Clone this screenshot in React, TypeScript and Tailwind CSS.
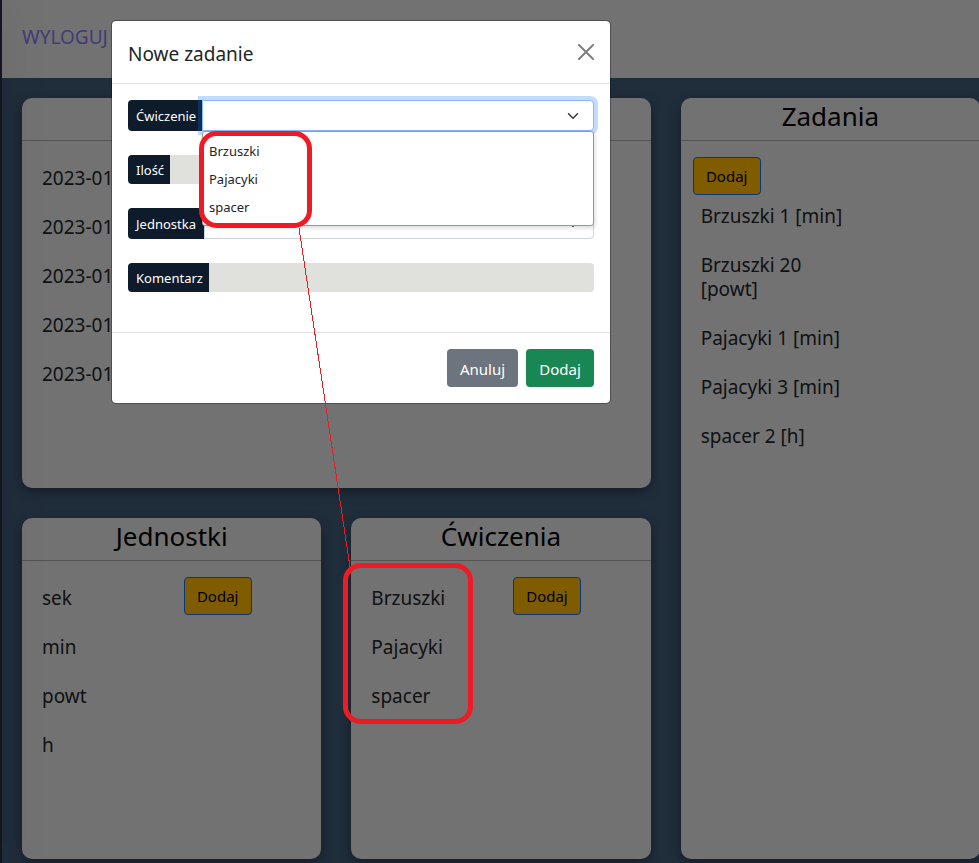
import React from "react";

const units = ["sek", "min", "powt", "h"];
const exercises = ["Brzuszki", "Pajacyki", "spacer"];
const days = ["2023-01", "2023-01", "2023-01", "2023-01", "2023-01"];
const tasks = [
  "Brzuszki 1 [min]",
  "Brzuszki 20 [powt]",
  "Pajacyki 1 [min]",
  "Pajacyki 3 [min]",
  "spacer 2 [h]",
];

function Card({
  title,
  className = "",
  children,
}: {
  title: string;
  className?: string;
  children: React.ReactNode;
}) {
  return (
    <section
      className={`rounded-[10px] bg-[#e4e4e4] shadow-[0_4px_12px_rgba(0,0,0,0.35)] ${className}`}
    >
      <h2 className="h-[43px] border-b border-[#a8a8a8] text-center text-[26px] leading-[36px] text-black">
        {title}
      </h2>
      <div className="px-3 pt-4">{children}</div>
    </section>
  );
}

function List({ items }: { items: string[] }) {
  return (
    <ul>
      {items.map((item, i) => (
        <li key={i} className="mb-2 border-t border-transparent p-2 text-[19px] leading-6">
          {item}
        </li>
      ))}
    </ul>
  );
}

function AddButton() {
  return (
    <button
      type="button"
      className="h-[38px] w-[68px] rounded border border-[#0d6efd] bg-[#ffb800] text-center text-[15px] leading-6 text-black"
    >
      Dodaj
    </button>
  );
}

function Chevron() {
  return (
    <svg
      viewBox="0 0 16 16"
      className="pointer-events-none absolute top-[10px] right-[15px] h-3 w-3"
      fill="none"
      stroke="#343a40"
      strokeWidth="2"
      strokeLinecap="round"
      strokeLinejoin="round"
    >
      <path d="m2 5 6 6 6-6" />
    </svg>
  );
}

const labelClass =
  "flex shrink-0 items-center rounded-l bg-[#0d1b2a] pl-2 text-[13px] leading-5 text-white";

function TaskDialog() {
  return (
    <div
      role="dialog"
      aria-labelledby="dialog-title"
      className="absolute top-5 left-[111px] w-[500px] rounded-[5px] border border-black/30 bg-white bg-clip-padding"
    >
      <header className="flex h-[63px] items-center justify-between border-b border-[#dee2e6] px-4">
        <h5 id="dialog-title" className="pt-1 text-[19px] leading-[30px]">
          Nowe zadanie
        </h5>
        <button type="button" aria-label="Zamknij" className="text-[#7f7f7f]">
          <svg viewBox="0 0 16 16" className="h-4 w-4" stroke="currentColor" strokeWidth="2" strokeLinecap="round">
            <path d="M1 1 15 15M15 1 1 15" />
          </svg>
        </button>
      </header>

      <form className="px-4 pt-4 pb-4">
        <div className="mb-6 flex h-[31px]">
          <label htmlFor="exercise" className={`${labelClass} w-[74px]`}>
            Ćwiczenie
          </label>
          <div className="relative z-10 flex-1">
            <select
              id="exercise"
              defaultValue=""
              className="h-full w-full appearance-none rounded-r border border-[#86b7fe] bg-white pl-2 text-[13px] shadow-[0_0_0_4px_rgba(13,110,253,0.25)] outline-none"
            >
              <option value=""></option>
              {exercises.map((e) => (
                <option key={e}>{e}</option>
              ))}
            </select>
            <Chevron />
            <ul className="absolute top-full right-0 left-0 rounded-[3px] border border-[#999] bg-white pt-[5px] pb-1 shadow-[1px_2px_4px_rgba(0,0,0,0.15)]">
              {exercises.map((e) => (
                <li key={e} className="px-[6px] text-[13px] leading-7">
                  {e}
                </li>
              ))}
            </ul>
          </div>
        </div>

        <div className="mb-6 flex h-[29px]">
          <label htmlFor="amount" className={`${labelClass} w-[42px]`}>
            Ilość
          </label>
          <input id="amount" className="min-w-0 flex-1 rounded-r bg-[#e0e1dc] px-2 text-[13px]" />
        </div>

        <div className="mb-6 flex h-[31px]">
          <label htmlFor="unit" className={`${labelClass} w-[76px]`}>
            Jednostka
          </label>
          <div className="relative flex-1">
            <select
              id="unit"
              defaultValue=""
              className="h-full w-full appearance-none rounded-r border border-[#ced4da] bg-white pl-2 text-[13px]"
            >
              <option value=""></option>
              {units.map((u) => (
                <option key={u}>{u}</option>
              ))}
            </select>
            <Chevron />
          </div>
        </div>

        <div className="mb-6 flex h-[29px]">
          <label htmlFor="comment" className={`${labelClass} w-[81px]`}>
            Komentarz
          </label>
          <input id="comment" className="min-w-0 flex-1 rounded-r bg-[#e0e1dc] px-2 text-[13px]" />
        </div>
      </form>

      <footer className="flex justify-end gap-2 border-t border-[#dee2e6] p-4">
        <button type="button" className="h-[38px] w-[71px] rounded bg-[#6c757d] pt-[2px] text-[15px] text-white">
          Anuluj
        </button>
        <button type="button" className="h-[38px] w-[68px] rounded bg-[#198754] pt-[2px] text-[15px] text-white">
          Dodaj
        </button>
      </footer>
    </div>
  );
}

function Annotations() {
  return (
    <svg
      className="pointer-events-none absolute top-0 left-0 z-20 h-[863px] w-[979px]"
      fill="none"
      stroke="#ed1c24"
      aria-hidden="true"
    >
      <rect x="201.5" y="133.5" width="108" height="92" rx="15" strokeWidth="5" />
      <rect x="345.5" y="565.5" width="125" height="156" rx="15" strokeWidth="5" />
      <path d="M299 228 350 567" strokeWidth="1" shapeRendering="crispEdges" />
    </svg>
  );
}

export default function App() {
  return (
    <div className="relative flex min-h-screen overflow-hidden bg-[#405a76] font-['Noto_Sans','Open_Sans',sans-serif] text-[#212529]">
      <aside className="z-10 w-[2px] shrink-0 bg-[#282a3c] shadow-[0_0_36px_rgba(0,0,0,0.6)]" />
      <div className="flex min-w-0 flex-1 flex-col">
        <nav className="flex h-[78px] items-center bg-[#e4e4e4] px-5">
          <a href="#logout" className="pb-1 text-[19px] leading-6 text-[#8478ee]">
            WYLOGUJ
          </a>
        </nav>
        <main className="-mr-px grid flex-1 grid-cols-3 grid-rows-[390px_1fr] gap-[30px] pt-5 pb-1 pl-5">
          <Card title="" className="col-span-2">
            <List items={days} />
          </Card>
          <Card title="Zadania" className="row-span-2">
            <AddButton />
            <div className="w-7/12">
              <List items={tasks} />
            </div>
          </Card>
          <Card title="Jednostki">
            <div className="grid grid-cols-2 items-start gap-6">
              <List items={units} />
              <AddButton />
            </div>
          </Card>
          <Card title="Ćwiczenia">
            <div className="grid grid-cols-2 items-start gap-6">
              <List items={exercises} />
              <AddButton />
            </div>
          </Card>
        </main>
      </div>

      <div className="absolute inset-0 z-20 bg-black/50" />
      <div className="absolute inset-0 z-30">
        <TaskDialog />
        <Annotations />
      </div>
    </div>
  );
}
